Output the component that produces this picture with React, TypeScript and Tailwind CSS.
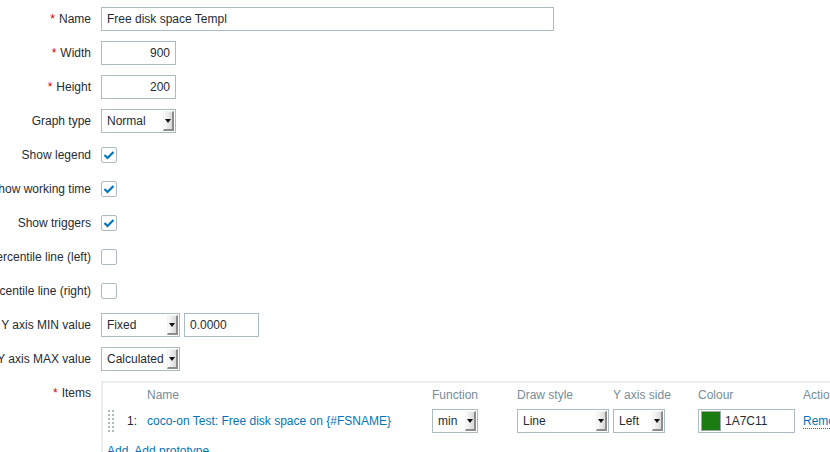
import React from 'react';

const font = { fontFamily: '"Liberation Sans", Arial, sans-serif' };

const Arrow: React.FC = () => (
  <span className="my-[1px] mr-[1px] w-[11px] flex items-center justify-center bg-gradient-to-r from-[#fbfbfb] to-[#d9d9d9] border-r-2 border-b-2 border-[#8c8c8c] border-t border-l border-t-[#f4f4f4] border-l-[#f4f4f4]">
    <svg width="6" height="4" viewBox="0 0 6 4">
      <path d="M0 0 H6 L3 4 Z" fill="#111" />
    </svg>
  </span>
);

const Select: React.FC<{ value: string; width: string }> = ({ value, width }) => (
  <div className={`flex h-[24px] border border-[#acbbc2] bg-white ${width}`}>
    <span className="flex-1 pl-[5px] leading-[22px] text-[#1f2c33] whitespace-nowrap overflow-hidden">{value}</span>
    <Arrow />
  </div>
);

const Input: React.FC<{ value: string; width: string; right?: boolean }> = ({ value, width, right }) => (
  <div
    className={`h-[24px] border border-[#acbbc2] bg-white px-[5px] leading-[22px] text-[#1f2c33] whitespace-nowrap ${width} ${
      right ? 'text-right' : ''
    }`}
  >
    {value}
  </div>
);

const Checkbox: React.FC<{ checked?: boolean }> = ({ checked }) => (
  <div className="w-[16px] h-[16px] border border-[#acbbc2] rounded-[2px] bg-white flex items-center justify-center">
    {checked && (
      <svg width="12" height="10" viewBox="0 0 12 10">
        <path d="M1.5 5 L4.5 8 L10.5 2" fill="none" stroke="#0275b8" strokeWidth="2.2" />
      </svg>
    )}
  </div>
);

const Row: React.FC<{ label: string; required?: boolean; children: React.ReactNode; top?: boolean }> = ({
  label,
  required,
  children,
  top,
}) => (
  <div className={`flex gap-[10px] ${top ? 'items-start' : 'items-center'} min-h-[24px]`}>
    <div className="w-[91px] shrink-0 flex justify-end h-[24px] items-center whitespace-nowrap text-[#1f2c33]">
      {required && <span className="text-[#d40000] mr-[4px]">*</span>}
      {label}
    </div>
    {children}
  </div>
);

const DragHandle: React.FC = () => (
  <div className="grid grid-cols-2 gap-x-[2px] gap-y-[2px] w-[6px]">
    {Array.from({ length: 12 }).map((_, i) => (
      <span key={i} className="w-[2px] h-[2px] bg-[#b0b9be]" />
    ))}
  </div>
);

export default function App() {
  return (
    <div className="w-[830px] h-[452px] overflow-hidden bg-white text-[12px]" style={font}>
      <div className="flex flex-col gap-[10px] pt-[7px]">
        <Row label="Name" required>
          <Input value="Free disk space Templ" width="w-[453px]" />
        </Row>
        <Row label="Width" required>
          <Input value="900" width="w-[75px]" right />
        </Row>
        <Row label="Height" required>
          <Input value="200" width="w-[75px]" right />
        </Row>
        <Row label="Graph type">
          <Select value="Normal" width="w-[75px]" />
        </Row>
        <Row label="Show legend">
          <Checkbox checked />
        </Row>
        <Row label="Show working time">
          <Checkbox checked />
        </Row>
        <Row label="Show triggers">
          <Checkbox checked />
        </Row>
        <Row label="Show percentile line (left)">
          <Checkbox />
        </Row>
        <Row label="Show percentile line (right)">
          <Checkbox />
        </Row>
        <Row label="Y axis MIN value">
          <div className="flex gap-[4px]">
            <Select value="Fixed" width="w-[79px]" />
            <Input value="0.0000" width="w-[75px]" />
          </div>
        </Row>
        <Row label="Y axis MAX value">
          <Select value="Calculated" width="w-[79px]" />
        </Row>
        <Row label="Items" required top>
          <div className="w-[760px] shrink-0 border-2 border-[#ebeef0] border-r-0 pl-[4px] pt-[3px]">
            <div className="grid grid-cols-[20px_20px_285px_85px_96px_85px_105px_80px] h-[18px] items-center text-[#768d99]">
              <span />
              <span />
              <span>Name</span>
              <span>Function</span>
              <span>Draw style</span>
              <span>Y axis side</span>
              <span>Colour</span>
              <span>Action</span>
            </div>
            <div className="grid grid-cols-[20px_20px_285px_85px_96px_85px_105px_80px] h-[24px] mt-[5px] items-center">
              <span className="pl-[1px]">
                <DragHandle />
              </span>
              <span className="text-[#1f2c33]">1:</span>
              <span className="text-[#0275b8] whitespace-nowrap">coco-on Test: Free disk space on {'{#FSNAME}'}</span>
              <Select value="min" width="w-[46px]" />
              <Select value="Line" width="w-[92px]" />
              <Select value="Left" width="w-[52px]" />
              <div className="flex items-center h-[24px] w-[97px] border border-[#acbbc2] bg-white">
                <span className="ml-[2px] w-[20px] h-[20px] bg-[#1a7c11] border border-[#9aa7ad]" />
                <span className="ml-[4px] text-[#1f2c33]">1A7C11</span>
              </div>
              <span className="text-[#0275b8] underline decoration-dotted underline-offset-[3px]">Remove</span>
            </div>
            <div className="mt-[11px] flex gap-[6px] text-[#0275b8] leading-[14px]">
              <span>Add</span>
              <span>Add prototype</span>
            </div>
          </div>
        </Row>
      </div>
    </div>
  );
}
